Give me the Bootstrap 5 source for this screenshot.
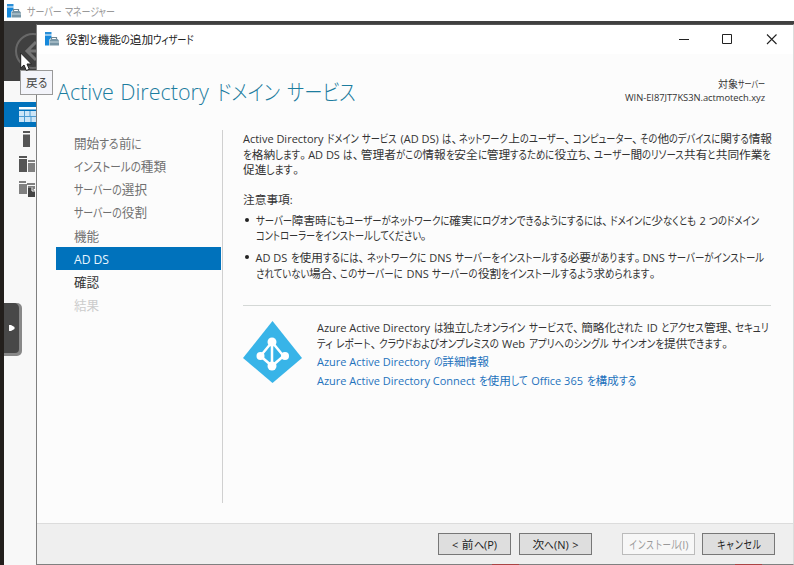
<!DOCTYPE html>
<html lang="ja">
<head>
<meta charset="utf-8">
<title>役割と機能の追加ウィザード</title>
<link href="https://cdn.jsdelivr.net/npm/bootstrap@5.3.0/dist/css/bootstrap.min.css" rel="stylesheet">
<style>
body{width:794px;height:565px;overflow:hidden;background:#f8f8f8;color:#333;font:11.7px/15.5px "Noto Sans CJK JP",sans-serif;font-feature-settings:"palt"}
.desk{width:794px;height:565px}
.edge{width:4px;background:#231f1c}
.mgr-title{height:21px;background:#fff;color:#999;padding-left:3px}
.mgr-head{height:60px;background:#404040}
.mgr-rail{width:33px;height:100px;margin-top:21px}
.rail-item{height:25px;padding-left:15px}
.rail-on{background:#0072bc}
.fit{white-space:nowrap;display:block;word-spacing:.08em}
.kana{display:inline-block;transform-origin:0 50%;line-height:1}
.punct{display:inline-block;line-height:1;width:.68em}
.lat{font-family:"Open Sans",sans-serif;font-size:.94em;line-height:1;word-spacing:0}
.wizard{left:36px;top:24px;width:758px;height:541px;background:#fcfcfc;border:1px solid #808080;border-right-color:#ddd;border-top-color:#555}
.wiz-title{height:29px;background:#fff;color:#222;padding:0 15px 2px 8px}
.wiz-head{height:76px;padding:22px 28px 0 20px}
.wiz-name{font-size:21.5px;line-height:30px;color:#1d7d9f;font-weight:300;word-spacing:.14em}
.wiz-name .lat{font-size:1em;font-weight:300;word-spacing:.04em}
.server{font-size:10px;line-height:13px;padding-top:1px}
.server .fit{height:13px}
.wiz-body{height:373px}
.steps{width:186px;border-right:1px solid #d0d0d0;padding:1px 1px 0 19px;font-size:12.6px;line-height:23.15px;color:#707070}
.step{padding-left:18px;height:23.15px}
.step-on{background:#0072bc;color:#e8f5ff}
.step-on .lat{font-size:.96em}
.step-next{color:#333}
.step-off{color:#ccc}
.detail{padding:0 0 0 20px;width:550px}
.detail .fit{height:15.5px}
.note{padding-left:12.5px;position:relative}
.note::before{content:"";position:absolute;left:2px;top:6px;width:4px;height:4px;border-radius:50%;background:#222}
.rule{width:528px;height:1px;background:#d4d8d6}
.azure a{color:#1f73bd;text-decoration:none}
.wiz-foot{height:41px;background:#efefef;border-top:1px solid #dcdcdc;padding:9px 18px 0 0}
.wbtn{width:73px;height:22px;border:1px solid #777;border-radius:0;background:#dedede;padding:0;font-size:11.7px;line-height:20px;color:#222;outline:0}
.wbtn:disabled{background:#f7f7f7;border-color:#bbb;color:#999;opacity:1}
.tip{left:20px;top:70px;width:33px;height:25px;background:#f3f4fa;border:1px solid #999;color:#444;padding:3px 0 0 5px}
.drawer{left:4px;top:303px;width:18px;height:53px;background:#888;border-radius:0 5px 5px 0}
.drawer-in{width:15px;height:50px;background:#484848;border-radius:0 5px 4px 0}
.cursor{left:20px;top:52px}
.backbtn{left:13px;top:31px}
.sliver{height:1px;width:27px;background:#a44;top:564px}
.s1{left:492px}.s2{left:735px}
.gap-mgr{margin-left:6px}
.gap-name{margin-left:7px}
.gap-memo{margin-top:14.5px}
.gap-first{margin-top:5px}
.gap-next{margin-top:6.5px}
.gap-rule{margin-top:25px}
.gap-azure{margin-top:13px}
.gap-link{margin-top:3px}
.logo{margin:2px 14px 0 0}
.gap-install{margin:0 7px 0 30px}
</style>
</head>
<body>
<svg width="0" height="0" class="position-absolute">
<symbol id="app" viewBox="0 0 14 14"><path d="M0 0h6.500v2.500H0z" fill="#2a8fd8"/><path d="M0 3.500h6.500v2L4 8v5.500H0z" fill="#1689dc"/><path d="M6.500 7.500V5.500h5v2" fill="none" stroke="#6f8794" stroke-width="1.200"/><path d="M4.500 8.500L6 7h6.500l1.500 1.500v5H4.500z" fill="#7795a5"/><path d="M4.500 10H14" stroke="#dce8ee" stroke-width=".8"/></symbol>
</svg>
<div class="desk d-flex position-relative">
  <div class="edge"></div>
  <div class="flex-grow-1">
    <div class="mgr-title d-flex align-items-center"><svg width="14" height="14"><use href="#app"/></svg><span class="fit gap-mgr" data-w="88">サーバー マネージャー</span></div>
    <div class="mgr-head"></div>
    <div class="mgr-rail">
      <div class="rail-item rail-on d-flex align-items-center"><svg width="17" height="16"><path d="M0 0h17v2.500H0z" fill="#fff"/><path d="M0 4h17v11H0z" fill="#cce5f7"/><path d="M5.500 4v11M0 9.500h17M11 4v5.500M12 9.500V15" stroke="#4a9bd2"/></svg></div>
      <div class="rail-item d-flex align-items-center"><svg width="16" height="17"><path d="M4 0h7v2H4zM4 3.500h7V16H4z" fill="#555"/></svg></div>
      <div class="rail-item d-flex align-items-center"><svg width="16" height="17"><path d="M0 0h8v2H0zM0 3h8v13H0z" fill="#555"/><path d="M9 4h7v2H9zM9 7h7v9H9z" fill="#808080"/></svg></div>
      <div class="rail-item d-flex align-items-center"><svg width="16" height="17"><path d="M0 0h7v2H0zM0 3h8v10H0zM8 2h8v2H8zM9 5h7v3H9z" fill="#808080"/><path d="M9 7h4l3 3v6H9z" fill="#444"/><path d="M13 6.500V10h3" fill="none" stroke="#fff"/></svg></div>
    </div>
  </div>
  <svg class="backbtn position-absolute" width="40" height="40"><circle cx="20" cy="20" r="17" fill="none" stroke="#686868" stroke-width="2"/><path d="M23 11l-9 9 9 9M14 20h18" fill="none" stroke="#747474" stroke-width="3"/></svg>
  <div class="drawer position-absolute"><div class="drawer-in"><svg width="15" height="50" class="d-block"><path d="M5 22h2l3.500 2v2L7 28H5z" fill="#fff"/></svg></div></div>

  <div class="wizard position-absolute d-flex flex-column">
    <div class="wiz-title d-flex align-items-center">
      <svg width="14" height="14"><use href="#app"/></svg>
      <span class="fit gap-name" data-w="128">役割と機能の追加ウィザード</span>
      <svg class="ms-auto" width="100" height="12"><path d="M1 6.500h10M89 1.500l9.500 9.500M98.500 1.500L89 11" stroke="#222" stroke-width="1.100" fill="none"/><path d="M44.500 1.500h9v9h-9z" fill="none" stroke="#222"/></svg>
    </div>
    <div class="wiz-head d-flex justify-content-between">
      <div class="wiz-name fit" data-w="299">Active Directory ドメイン サービス</div>
      <div class="server d-flex flex-column align-items-end"><span class="fit" data-w="47">対象サーバー</span><span class="fit" data-w="140">WIN-EI87JT7KS3N.actmotech.xyz</span></div>
    </div>
    <div class="wiz-body d-flex">
      <div class="steps">
        <div class="step"><span class="fit" data-w="68">開始する前に</span></div>
        <div class="step"><span class="fit" data-w="92">インストールの種類</span></div>
        <div class="step"><span class="fit" data-w="73">サーバーの選択</span></div>
        <div class="step"><span class="fit" data-w="73">サーバーの役割</span></div>
        <div class="step"><span class="fit">機能</span></div>
        <div class="step step-on"><span class="fit" data-w="35">AD DS</span></div>
        <div class="step step-next"><span class="fit">確認</span></div>
        <div class="step step-off"><span class="fit">結果</span></div>
      </div>
      <div class="detail">
        <div>
          <span class="fit" data-w="529">Active Directory ドメイン サービス (AD DS) は、ネットワーク上のユーザー、コンピューター、その他のデバイスに関する情報</span>
          <span class="fit" data-w="528">を格納します。AD DS は、管理者がこの情報を安全に管理するために役立ち、ユーザー間のリソース共有と共同作業を</span>
          <span class="fit" data-w="58">促進します。</span>
        </div>
        <div class="gap-memo"><span class="fit" data-w="49">注意事項:</span></div>
        <div class="note gap-first">
          <span class="fit" data-w="504">サーバー障害時にもユーザーがネットワークに確実にログオンできるようにするには、ドメインに少なくとも 2 つのドメイン</span>
          <span class="fit" data-w="173">コントローラーをインストールしてください。</span>
        </div>
        <div class="note gap-next">
          <span class="fit" data-w="509">AD DS を使用するには、ネットワークに DNS サーバーをインストールする必要があります。DNS サーバーがインストール</span>
          <span class="fit" data-w="402">されていない場合、このサーバーに DNS サーバーの役割をインストールするよう求められます。</span>
        </div>
        <div class="rule gap-rule"></div>
        <div class="azure d-flex gap-azure">
          <svg class="logo" width="60" height="63" viewBox="0 0 60 63"><path d="M29.500 0L59 37 29.500 62 0 37z" fill="#38b4e8"/><path d="M29 21L17.500 35 29 45l11.500-10zM29 21v24" fill="none" stroke="#fff" stroke-width="2.500"/><g fill="#fff"><circle cx="29" cy="21" r="4.500"/><circle cx="17.500" cy="35" r="4"/><circle cx="42" cy="35" r="4"/><circle cx="29" cy="45" r="4.500"/></g></svg>
          <div>
            <span class="fit" data-w="452">Azure Active Directory は独立したオンライン サービスで、簡略化された ID とアクセス管理、セキュリ</span>
            <span class="fit" data-w="413">ティ レポート、クラウドおよびオンプレミスの Web アプリへのシングル サインオンを提供できます。</span>
            <a class="fit gap-link" href="#" data-w="172">Azure Active Directory の詳細情報</a>
            <a class="fit gap-link" href="#" data-w="319">Azure Active Directory Connect を使用して Office 365 を構成する</a>
          </div>
        </div>
      </div>
    </div>
    <div class="flex-grow-1"></div>
    <div class="wiz-foot d-flex justify-content-end">
      <button class="wbtn btn d-flex justify-content-center me-2"><span class="fit" data-w="45">&lt; 前へ(P)</span></button>
      <button class="wbtn btn d-flex justify-content-center"><span class="fit" data-w="46">次へ(N) &gt;</span></button>
      <button class="wbtn btn d-flex justify-content-center gap-install" disabled><span class="fit" data-w="60">インストール(I)</span></button>
      <button class="wbtn btn d-flex justify-content-center"><span class="fit" data-w="44">キャンセル</span></button>
    </div>
  </div>
  <div class="sliver s1 position-absolute"></div><div class="sliver s2 position-absolute"></div>
  <div class="tip position-absolute"><span class="fit" data-w="21">戻る</span></div>
  <svg class="cursor position-absolute" width="14" height="21"><path d="M.7 1v15l3.300-3 2.300 5.500 3-1.200L7 12h4.500z" fill="#fff" stroke="#222"/></svg>
</div>
<script src="https://cdn.jsdelivr.net/npm/bootstrap@5.3.0/dist/js/bootstrap.bundle.min.js"></script>
<script>
document.querySelectorAll('.fit').forEach(function (el) {
  el.innerHTML = el.innerHTML
    .replace(/(?:&lt;|&gt;|[A-Za-z0-9().:\-])+(?: (?:[A-Za-z0-9()]+))*/g, '<span class="lat">$&</span>')
    .replace(/[\u3040-\u30ff]+/g, '<span class="kana">$&</span>')
    .replace(/[\u3001\u3002]/g, '<span class="punct">$&</span>');
  if (!el.dataset.w) return;
  var target = +el.dataset.w, r = document.createRange();
  r.selectNodeContents(el);
  var diff = target - r.getBoundingClientRect().width;
  var kana = [].slice.call(el.querySelectorAll('.kana'));
  if (!kana.length) {
    el.querySelectorAll('.lat').forEach(function (p) { p.style.letterSpacing = diff / p.textContent.length + 'px'; });
    return;
  }
  var widths = kana.map(function (k) { return k.getBoundingClientRect().width; });
  var total = widths.reduce(function (a, b) { return a + b; }, 0);
  var scale = (total + diff) / total;
  kana.forEach(function (k, i) {
    k.style.transform = 'scaleX(' + scale + ')';
    k.style.marginRight = (scale - 1) * widths[i] + 'px';
  });
});
</script>
</body>
</html>
